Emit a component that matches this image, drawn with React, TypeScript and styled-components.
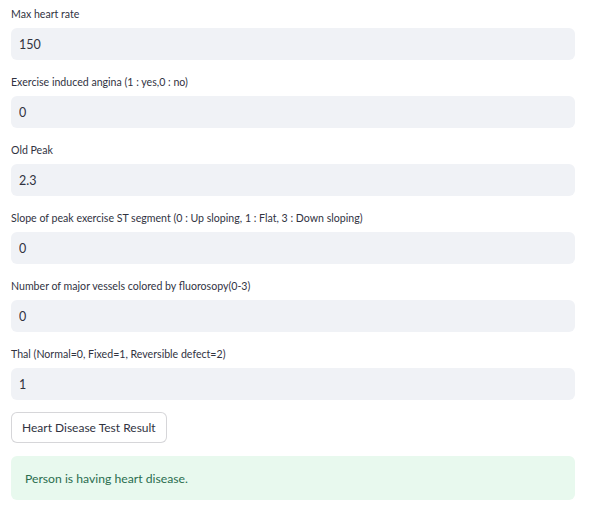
import React from "react";
import styled, { createGlobalStyle } from "styled-components";

const GlobalStyle = createGlobalStyle`
  body {
    margin: 0;
    background: #ffffff;
    font-family: "Lato", "Noto Sans", sans-serif;
    color: #31333f;
  }
`;

const Page = styled.div`
  width: 564px;
  padding: 0 0 0 11px;
  display: flex;
  flex-direction: column;
`;

const Field = styled.div`
  display: flex;
  flex-direction: column;
  padding-top: 6px;
  margin-bottom: 8px;
`;

const Label = styled.label`
  font-size: 10.6px;
  line-height: 16px;
  height: 16px;
  margin-bottom: 6px;
  color: #31333f;
`;

const Input = styled.input`
  box-sizing: border-box;
  height: 32px;
  width: 100%;
  border: none;
  border-radius: 6px;
  background: #f0f2f6;
  padding: 0 8px;
  font-family: inherit;
  font-size: 12.5px;
  color: #31333f;
  outline: none;
`;

const Button = styled.button`
  align-self: flex-start;
  box-sizing: border-box;
  height: 31px;
  margin-top: 4px;
  padding: 0 10px;
  border: 1px solid rgba(49, 51, 63, 0.2);
  border-radius: 6px;
  background: #ffffff;
  font-family: inherit;
  font-size: 12px;
  color: #31333f;
`;

const Alert = styled.div`
  box-sizing: border-box;
  margin-top: 13px;
  height: 44px;
  display: flex;
  align-items: center;
  padding: 0 14px;
  border-radius: 6px;
  background: #e8f9ee;
  color: #2a6e4e;
  font-size: 12.2px;
`;

const fields = [
  { label: "Max heart rate", value: "150" },
  { label: "Exercise induced angina (1 : yes,0 : no)", value: "0" },
  { label: "Old Peak", value: "2.3" },
  {
    label:
      "Slope of peak exercise ST segment (0 : Up sloping, 1 : Flat, 3 : Down sloping)",
    value: "0",
  },
  { label: "Number of major vessels colored by fluorosopy(0-3)", value: "0" },
  { label: "Thal (Normal=0, Fixed=1, Reversible defect=2)", value: "1" },
];

export default function App() {
  return (
    <>
      <GlobalStyle />
      <Page>
        {fields.map((f) => (
          <Field key={f.label}>
            <Label>{f.label}</Label>
            <Input defaultValue={f.value} />
          </Field>
        ))}
        <Button>Heart Disease Test Result</Button>
        <Alert>Person is having heart disease.</Alert>
      </Page>
    </>
  );
}
